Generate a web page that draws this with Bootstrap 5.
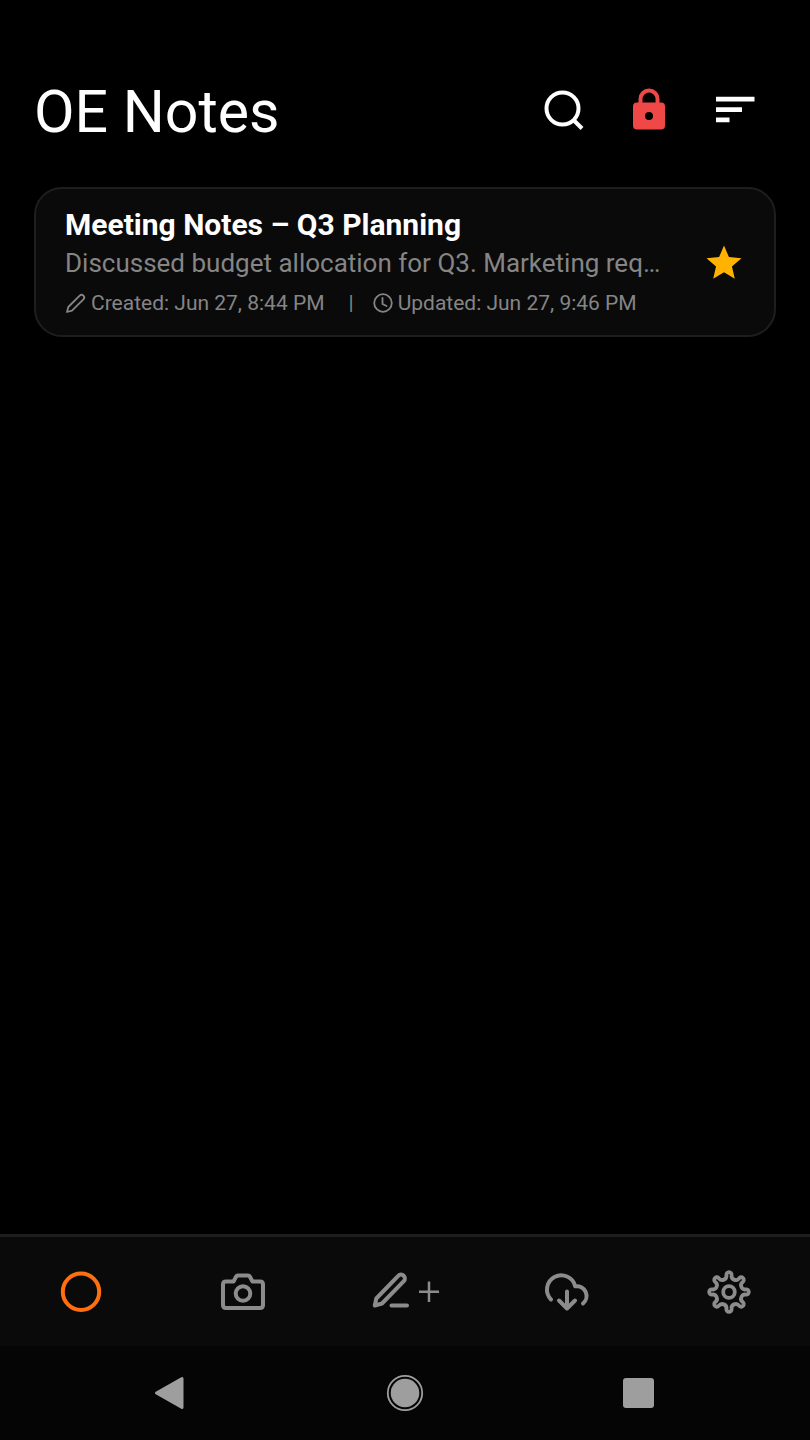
<!DOCTYPE html>
<html lang="en">
<head>
<meta charset="utf-8">
<meta name="viewport" content="width=device-width, initial-scale=1">
<title>OE Notes</title>
<link href="https://cdn.jsdelivr.net/npm/bootstrap@5.3.0/dist/css/bootstrap.min.css" rel="stylesheet">
<style>
  body { background: #000; color: #fff; font-family: Roboto, "Liberation Sans", sans-serif; }
  svg { display: block; fill: none; }
  .plain-btn { background: none; border: 0; padding: 0; color: inherit; display: flex; align-items: center; justify-content: center; }
  .app-header { padding: 71px 32px 38px 34px; }
  .app-title { font-size: 59px; line-height: 74px; padding-top: 4px; font-weight: 400; }
  .tool-btn { width: 86px; height: 76px; }
  .note-card { background: #0a0a0a; border: 2px solid #1e1e1e; border-radius: 28px; margin: 0 34px; padding: 16px 29px 14px; color: #fff; }
  .note-title { font-size: 30px; line-height: 40px; font-weight: 700; }
  .note-text { font-size: 26px; line-height: 36px; color: #858585; }
  .note-meta { font-size: 21px; line-height: 36px; margin-top: 4px; color: #858585; }
  .note-divider { margin: 0 18px 0 24px; }
  .tab-bar { background: #0a0a0a; border-top: 3px solid #1e1e1e; height: 112px; color: #8c8c8c; }
  .tab-bar .active { color: #ff6f0f; }
  .system-bar { background: #050505; height: 94px; padding: 0 54px; color: #9e9e9e; }
</style>
</head>
<body class="min-vh-100 d-flex flex-column">
<header class="app-header d-flex align-items-center justify-content-between">
  <h1 class="app-title mb-0">OE Notes</h1>
  <div class="d-flex">
    <button type="button" class="plain-btn tool-btn" aria-label="Search">
      <svg width="44" height="44" viewBox="0 0 44 44" stroke="#fff" stroke-width="4" stroke-linecap="butt"><circle cx="21.500" cy="20.500" r="16"/><path d="M32 31.500 41 40.500"/></svg>
    </button>
    <button type="button" class="plain-btn tool-btn" aria-label="Locked notes">
      <svg width="44" height="44" viewBox="0 0 44 44"><path d="M13.500 17V11a8.500 8.500 0 0 1 17 0v6" stroke="#f04747" stroke-width="4"/><path fill="#f04747" fill-rule="evenodd" d="M10 14.500h24a4 4 0 0 1 4 4v19a4 4 0 0 1-4 4H10a4 4 0 0 1-4-4v-19a4 4 0 0 1 4-4zm12 9.500a4 4 0 1 0 0 8 4 4 0 0 0 0-8z"/></svg>
    </button>
    <button type="button" class="plain-btn tool-btn" aria-label="Sort">
      <svg width="44" height="44" viewBox="0 0 44 44"><path fill="#fff" d="M3 8.800h38.500v4.700H3zM3 19.200h26v4.700H3zM3 29.500h13.500v4.700H3z"/></svg>
    </button>
  </div>
</header>

<main class="flex-grow-1">
  <article class="note-card d-flex align-items-center justify-content-between">
    <div class="overflow-hidden">
      <h2 class="note-title m-0 text-truncate">Meeting Notes – Q3 Planning</h2>
      <p class="note-text m-0 text-truncate">Discussed budget allocation for Q3. Marketing req…</p>
      <div class="note-meta d-flex align-items-center">
        <svg class="me-1" width="22" height="22" viewBox="0 0 22 22" stroke="currentColor" stroke-width="1.800" stroke-linejoin="round"><path d="M2 20 3.300 15 14.700 3.600a2.500 2.500 0 0 1 3.700 3.700L7 18.700z"/></svg>
        <span>Created: Jun 27, 8:44 PM</span>
        <span class="note-divider">|</span>
        <svg class="me-1" width="22" height="22" viewBox="0 0 22 22" stroke="currentColor" stroke-width="1.800" stroke-linecap="round" stroke-linejoin="round"><circle cx="11" cy="11" r="8.800"/><path d="M10.500 6V12l4 2"/></svg>
        <span>Updated: Jun 27, 9:46 PM</span>
      </div>
    </div>
    <button type="button" class="plain-btn flex-shrink-0" aria-label="Favourite">
      <svg width="42" height="42" viewBox="0 0 24 24"><path fill="#ffb300" d="M12 17.270 18.180 21l-1.640-7.030L22 9.240l-7.190-.610L12 2 9.190 8.630 2 9.240l5.460 4.730L5.820 21z"/></svg>
    </button>
  </article>
</main>

<nav class="tab-bar d-flex" aria-label="Sections">
  <button type="button" class="plain-btn active flex-fill w-100" aria-label="Notes">
    <svg width="48" height="48" viewBox="0 0 48 48" stroke="currentColor" stroke-width="4"><circle cx="24" cy="23.700" r="18.200"/></svg>
  </button>
  <button type="button" class="plain-btn flex-fill w-100" aria-label="Camera">
    <svg width="48" height="48" viewBox="0 0 48 48" stroke="currentColor" stroke-width="4" stroke-linejoin="round"><path d="M14.500 13.500 17.200 8.500Q17.700 7.500 19 7.500h10q1.300 0 1.800 1l2.700 5H41q3 0 3 3V37q0 3-3 3H7q-3 0-3-3V16.500q0-3 3-3z"/><circle cx="24" cy="25.500" r="7.300"/></svg>
  </button>
  <button type="button" class="plain-btn flex-fill w-100" aria-label="New note">
    <svg width="70" height="48" viewBox="0 0 70 48" stroke="currentColor" stroke-width="4" stroke-linecap="round" stroke-linejoin="round"><path d="M4.800 37.500 6.300 30.500 28.200 7.800a3.700 3.700 0 0 1 5.600 5.400L12 35.500zM21.500 37.500H37"/><path stroke-width="2.500" stroke-linecap="butt" d="M49 23.700H69M59 13.500V34"/></svg>
  </button>
  <button type="button" class="plain-btn flex-fill w-100" aria-label="Download backup">
    <svg width="48" height="48" viewBox="0 0 48 48" stroke="currentColor" stroke-width="4" stroke-linecap="round" stroke-linejoin="round"><path d="M8 31.500A14.300 14.300 0 1 1 32.200 18.300A9.800 9.800 0 0 1 40 35.500M24 23.500v17M16 32.500l8 8 8-8"/></svg>
  </button>
  <button type="button" class="plain-btn flex-fill w-100" aria-label="Settings">
    <svg width="48" height="48" viewBox="-24 -24 48 48" stroke="currentColor" stroke-width="3.800" stroke-linejoin="round"><circle r="5.800"/><path d="M-2.575-16.840A2.600 2.600 0 1 1 2.575-16.840A4.200 4.200 0 0 0 10.090-13.730A2.600 2.600 0 1 1 13.730-10.090A4.200 4.200 0 0 0 16.840-2.575A2.600 2.600 0 1 1 16.840 2.575A4.200 4.200 0 0 0 13.730 10.090A2.600 2.600 0 1 1 10.090 13.730A4.200 4.200 0 0 0 2.575 16.840A2.600 2.600 0 1 1-2.575 16.840A4.200 4.200 0 0 0-10.090 13.730A2.600 2.600 0 1 1-13.730 10.090A4.200 4.200 0 0 0-16.840 2.575A2.600 2.600 0 1 1-16.840-2.575A4.200 4.200 0 0 0-13.730-10.090A2.600 2.600 0 1 1-10.090-13.730A4.200 4.200 0 0 0-2.575-16.840z"/></svg>
  </button>
</nav>

<footer class="system-bar d-flex">
  <button type="button" class="plain-btn flex-fill w-100" aria-label="Back">
    <svg width="40" height="40" viewBox="0 0 40 40"><path fill="currentColor" stroke="currentColor" stroke-width="3" stroke-linejoin="round" d="M5.500 20 31 5.500v29z"/></svg>
  </button>
  <button type="button" class="plain-btn flex-fill w-100" aria-label="Home">
    <svg width="40" height="40" viewBox="0 0 40 40"><circle cx="20" cy="20" r="14.300" fill="currentColor"/><circle cx="20" cy="20" r="17.200" stroke="currentColor" stroke-width="1.800"/></svg>
  </button>
  <button type="button" class="plain-btn flex-fill w-100" aria-label="Recent apps">
    <svg width="40" height="40" viewBox="0 0 40 40"><rect x="4" y="5" width="31" height="30" rx="3" fill="currentColor"/></svg>
  </button>
</footer>
<script src="https://cdn.jsdelivr.net/npm/bootstrap@5.3.0/dist/js/bootstrap.bundle.min.js"></script>
</body>
</html>
